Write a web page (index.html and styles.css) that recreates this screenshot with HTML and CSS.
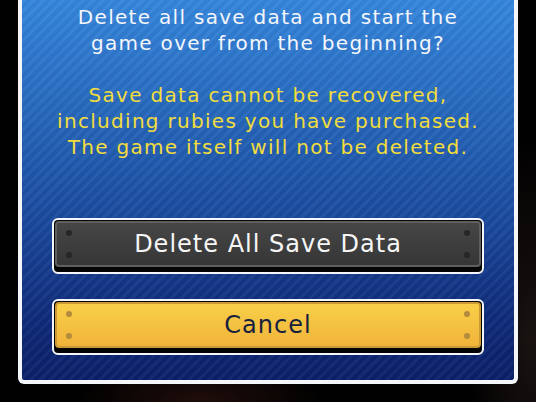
FILE: index.html
```html
<!DOCTYPE html>
<html lang="en">
<head>
  <meta charset="UTF-8" />
  <title>Delete Save Data</title>
  <link rel="stylesheet" href="styles.css">
</head>
<body>
  <div class="scene">
    <div class="dialog">
      <div class="message">
        <p class="question">Delete all save data and start the<br>game over from the beginning?</p>
        <p class="warning">Save data cannot be recovered,<br>including rubies you have purchased.<br>The game itself will not be deleted.</p>
      </div>

      <div class="actions">
        <button class="plate plate-dark">
          <span class="face">
            <span class="rivet tl"></span><span class="rivet bl"></span>
            <span class="label">Delete All Save Data</span>
            <span class="rivet tr"></span><span class="rivet br"></span>
          </span>
        </button>
        <button class="plate plate-gold">
          <span class="face">
            <span class="rivet tl"></span><span class="rivet bl"></span>
            <span class="label">Cancel</span>
            <span class="rivet tr"></span><span class="rivet br"></span>
          </span>
        </button>
      </div>
    </div>
  </div>
</body>
</html>
```

FILE: styles.css
```css
* {
  box-sizing: border-box;
}
html, body {
  margin: 0;
  height: 100%;
  background: #020101;
  overflow: hidden;
}
.scene {
  height: 100%;
  background:
    radial-gradient(ellipse 120px 40px at 200px 400px, rgba(60, 25, 20, 0.5), transparent),
    radial-gradient(ellipse 60px 200px at 530px 340px, rgba(40, 30, 28, 0.6), transparent),
    #020101;
}
.dialog {
  margin-left: 18px;
  width: 500px;
  border: 4px solid #f4f6fb;
  border-top: none;
  border-radius: 0 0 6px 6px;
  background:
    repeating-linear-gradient(135deg, rgba(255, 255, 255, 0.04) 0 3px, rgba(0, 0, 0, 0.03) 3px 7px),
    linear-gradient(180deg, #3586dc 0%, #2462b6 35%, #1a479a 60%, #0f2a78 85%, #0b2068 100%);
  padding: 4px 30px 25px;
  font-family: "DejaVu Sans", sans-serif;
}
.message {
  text-align: center;
  font-size: 20px;
  line-height: 26px;
  letter-spacing: 1.3px;
  white-space: nowrap;
}
.message p {
  margin: 0;
}
.question {
  color: #f4f6fb;
  margin-bottom: 26px !important;
}
.warning {
  color: #f2dd3c;
}
.actions {
  margin-top: 58px;
  display: flex;
  flex-direction: column;
  gap: 25px;
}
.plate {
  display: block;
  flex: none;
  width: 100%;
  height: 56px;
  padding: 1px 1px 5px;
  border: 2px solid #f4f6fb;
  border-radius: 6px;
  background: #050505;
  font: inherit;
  cursor: pointer;
}
.face {
  position: relative;
  display: flex;
  align-items: center;
  justify-content: center;
  height: 100%;
  border-radius: 4px;
  font-size: 24px;
  letter-spacing: 1px;
}
.plate-dark .face {
  background: linear-gradient(180deg, #464646, #363636);
  border: 2px solid #5e5e5e;
  color: #f6f6f6;
}
.plate-gold .face {
  background: linear-gradient(180deg, #f8cf48, #f1b43a);
  border: 2px solid #c99a36;
  color: #17213e;
}
.rivet {
  position: absolute;
  width: 6px;
  height: 6px;
  border-radius: 50%;
}
.plate-dark .rivet { background: #262626; }
.plate-gold .rivet { background: #b38b3c; }
.rivet.tl { left: 9px; top: 7px; }
.rivet.bl { left: 9px; bottom: 7px; }
.rivet.tr { right: 9px; top: 7px; }
.rivet.br { right: 9px; bottom: 7px; }
```
